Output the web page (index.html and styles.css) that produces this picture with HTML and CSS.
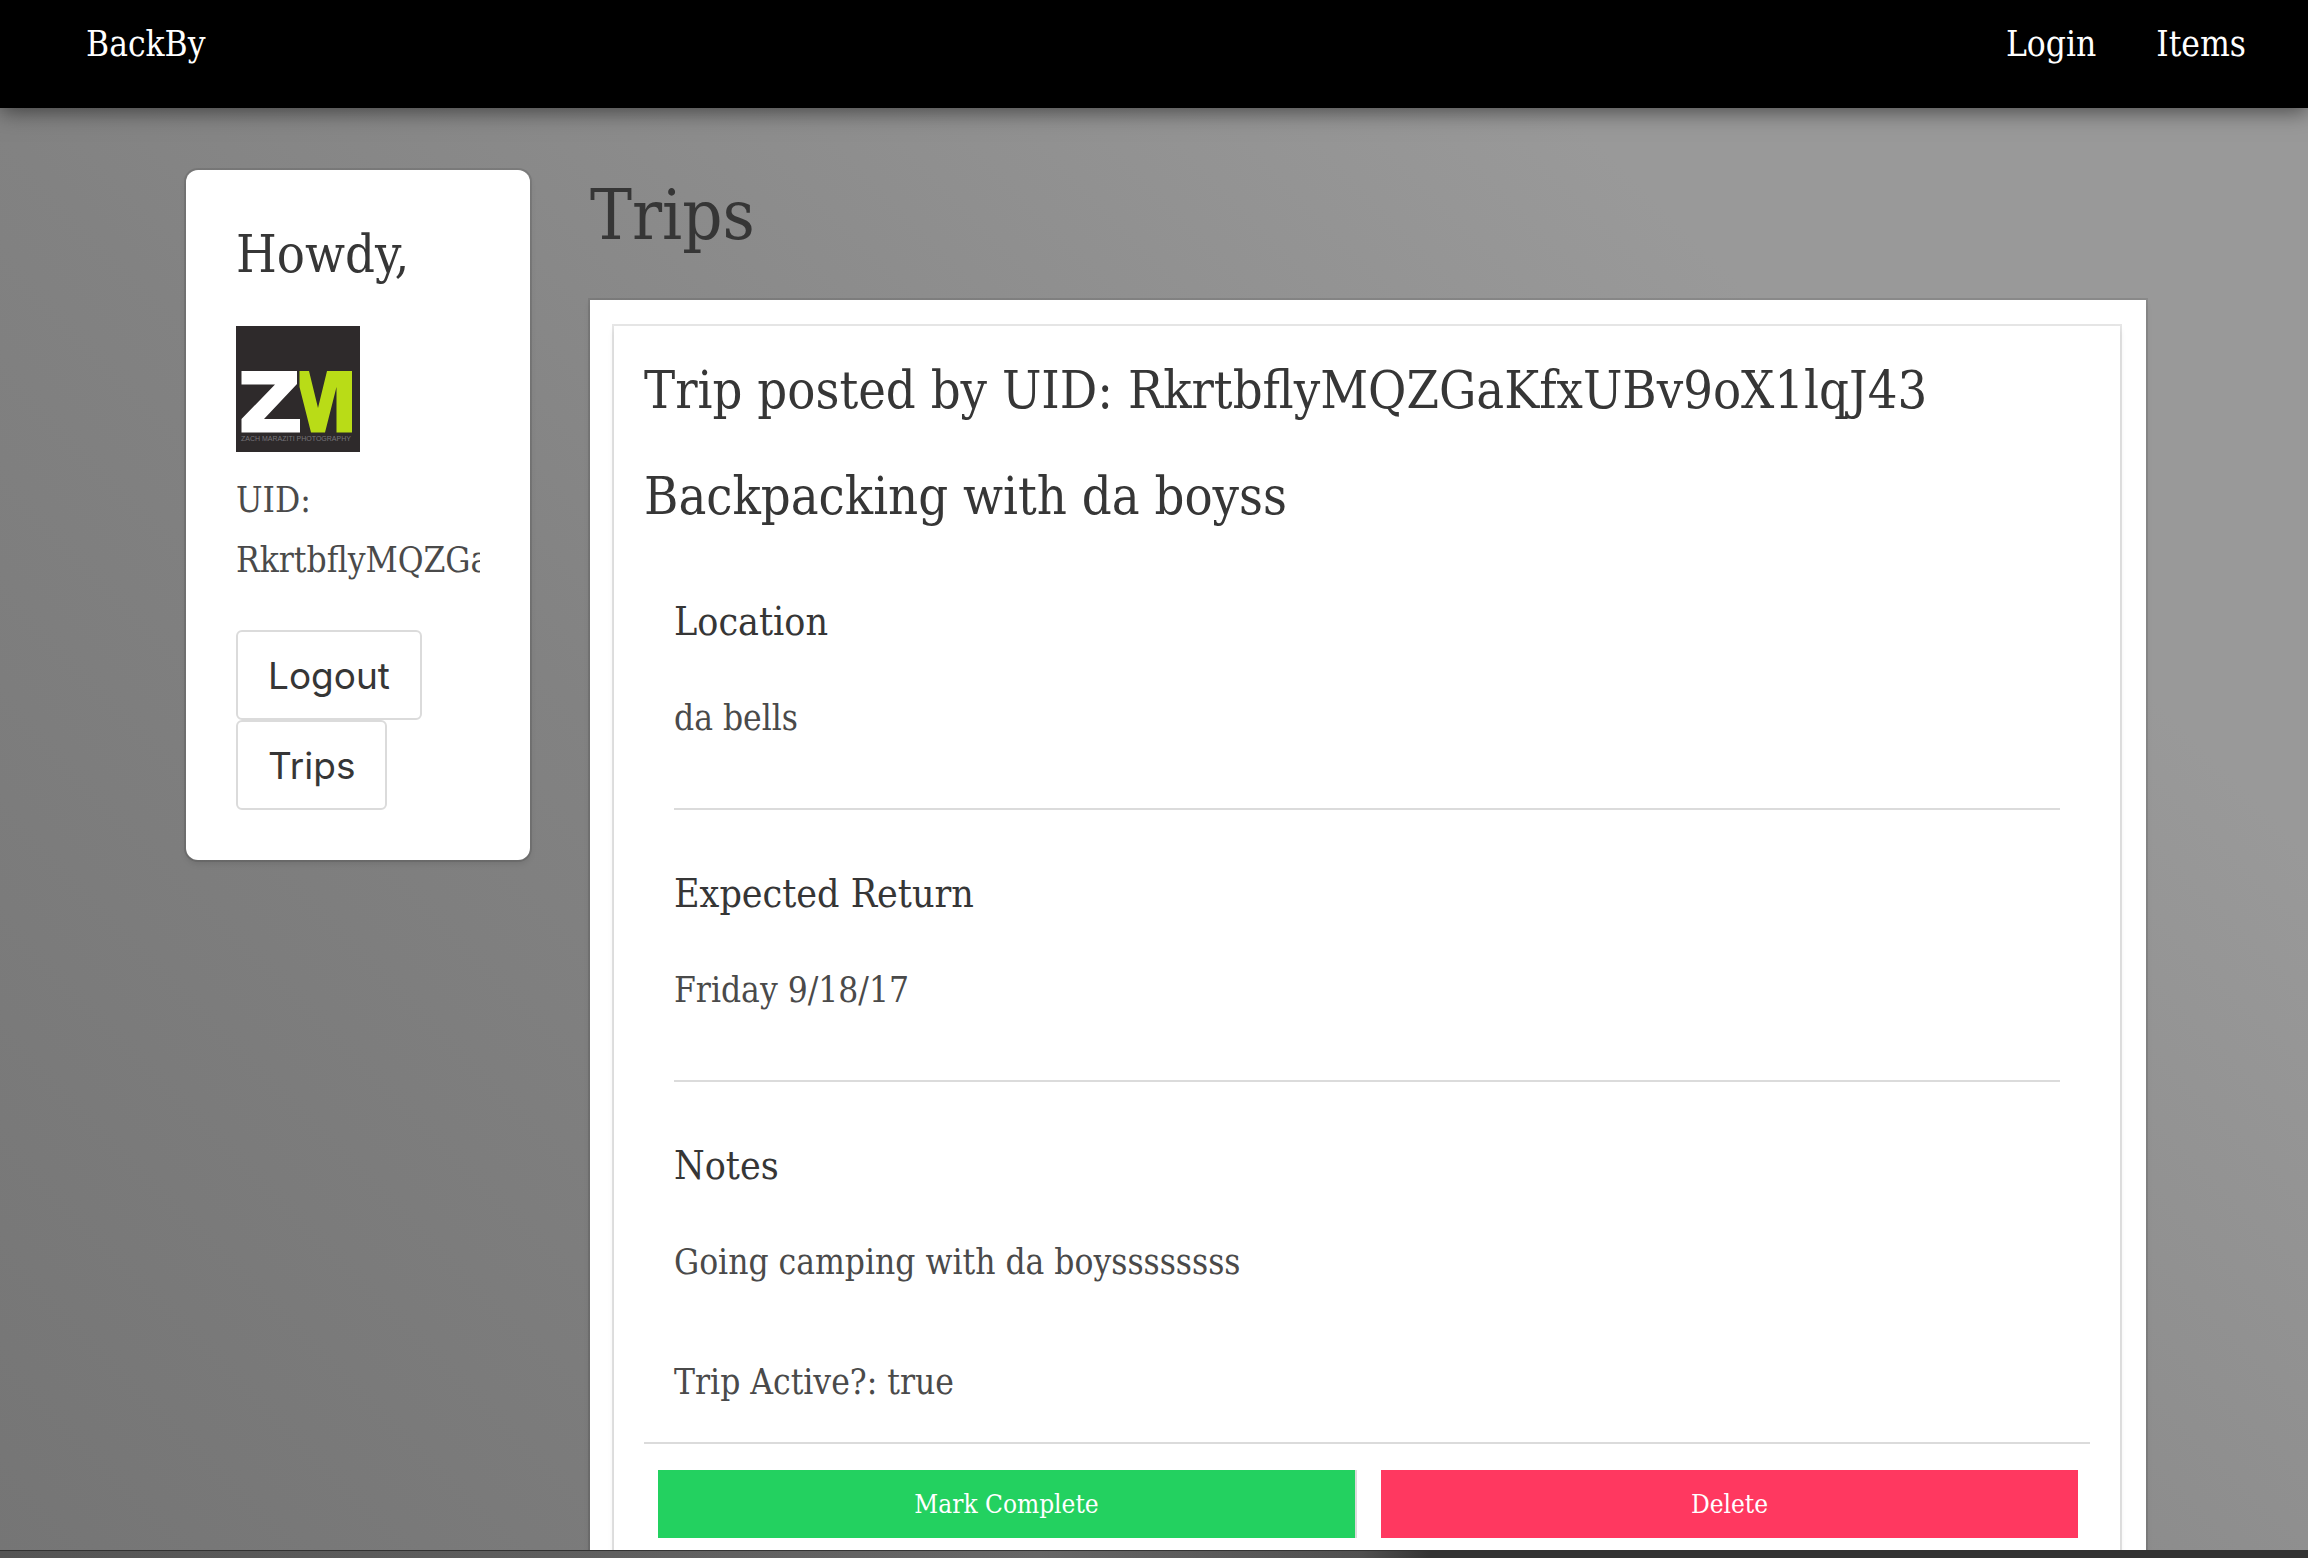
FILE: index.html
```html
<!DOCTYPE html>
<html lang="en">
<head>
<meta charset="utf-8">
<title>BackBy</title>
<link rel="stylesheet" href="styles.css">
</head>
<body>
<nav class="navbar">
  <a class="nav-link" href="#">BackBy</a>
  <div class="nav-menu">
    <a class="nav-link" href="#">Login</a>
    <a class="nav-link" href="#">Items</a>
  </div>
</nav>
<div class="page">
  <aside class="box profile">
    <h2 class="title">Howdy,</h2>
    <svg class="avatar" viewBox="0 0 124 126" role="img" aria-label="Profile picture">
      <rect width="124" height="126" fill="#2e2a2b"/>
      <path fill="#fff" d="M5.500 45H61V58L28 93H64V106.500H5.500V93L39 58.500H5.500Z"/>
      <path fill="#b9dc17" d="M63.500 45H73L82 82L91 45H116V106.500H100.500V61L89 106.500H75L63.500 61Z"/>
      <text x="5" y="115" font-size="7" fill="#77757a" class="avatar-caption">ZACH MARAZITI PHOTOGRAPHY</text>
    </svg>
    <p class="uid">UID: RkrtbflyMQZGaKfxUBv9oX1lqJ43</p>
    <div class="actions">
      <button class="button" type="button">Logout</button>
      <button class="button" type="button">Trips</button>
    </div>
  </aside>
  <main class="trips">
    <h1 class="heading">Trips</h1>
    <div class="panel">
      <article class="card">
        <h2 class="title">Trip posted by UID: RkrtbflyMQZGaKfxUBv9oX1lqJ43</h2>
        <h2 class="title">Backpacking with da boyss</h2>
        <div class="details">
          <section class="detail">
            <h3 class="subtitle">Location</h3>
            <p>da bells</p>
          </section>
          <section class="detail">
            <h3 class="subtitle">Expected Return</h3>
            <p>Friday 9/18/17</p>
          </section>
          <section class="detail">
            <h3 class="subtitle">Notes</h3>
            <p>Going camping with da boyssssssss</p>
          </section>
          <p>Trip Active?: true</p>
        </div>
        <footer class="card-footer">
          <button class="footer-button complete" type="button">Mark Complete</button>
          <button class="footer-button delete" type="button">Delete</button>
        </footer>
      </article>
    </div>
  </main>
</div>
<div class="dock-edge"></div>
</body>
</html>
```
FILE: styles.css
```css
* {
  box-sizing: border-box;
}

body {
  --serif: "DejaVu Serif Condensed", "Liberation Serif", serif;
  --line: #dbdbdb;
  --edge: 0 4px 6px rgba(10, 10, 10, 0.1), 0 0 0 2px rgba(10, 10, 10, 0.1);
  display: flex;
  flex-direction: column;
  height: 100vh;
  margin: 0;
  overflow: hidden;
  font-family: var(--serif);
  font-size: 35px;
  line-height: 60px;
  color: #4a4a4a;
  background: linear-gradient(45deg, #757575, #828282 37%, #999 78%);
}

h1, h2, h3, p {
  margin: 0;
  font-weight: 400;
}

.navbar {
  display: flex;
  flex: none;
  justify-content: space-between;
  height: 108px;
  padding: 14px 62px 0 86px;
  background: #000;
  box-shadow: 0 4px 20px rgba(0, 0, 0, 0.5);
}

.nav-menu {
  display: flex;
  gap: 60px;
}

.nav-link {
  color: #fff;
  text-decoration: none;
}

.page {
  display: flex;
  flex: 1;
  gap: 60px;
  align-items: flex-start;
  min-height: 0;
  padding: 62px 162px 0 186px;
  overflow: hidden;
}

.box {
  flex: none;
  width: 344px;
  padding: 50px;
  background: #fff;
  border-radius: 12px;
  box-shadow: var(--edge);
}

.title {
  margin-bottom: 38px;
  font-size: 52px;
  line-height: 68px;
  color: #363636;
}

.avatar {
  display: block;
  width: 124px;
  height: 126px;
  margin-bottom: 18px;
}

.avatar-caption {
  font-family: "Liberation Sans", sans-serif;
}

.uid {
  margin-bottom: 40px;
  overflow: hidden;
}

.actions {
  display: flex;
  flex-direction: column;
  align-items: flex-start;
}

.button {
  height: 90px;
  padding: 0 30px;
  font-family: Inter, sans-serif;
  font-size: 37px;
  color: #363636;
  background: #fff;
  border: 2px solid var(--line);
  border-radius: 6px;
}

.trips {
  flex: 1;
  min-width: 0;
}

.heading {
  margin-bottom: 40px;
  font-size: 70px;
  line-height: 90px;
  color: #363636;
}

.panel {
  padding: 26px 26px 26px 24px;
  background: #fff;
  box-shadow: var(--edge);
}

.card {
  padding: 30px;
  box-shadow: var(--edge);
}

.details {
  padding: 24px 30px 30px;
}

.detail {
  padding-bottom: 60px;
}

.detail + .detail {
  padding-top: 54px;
  border-top: 2px solid var(--line);
}

.subtitle {
  margin-bottom: 36px;
  font-size: 39px;
  color: #363636;
}

.card-footer {
  display: flex;
  gap: 24px;
  padding: 26px 12px 12px 14px;
  border-top: 2px solid var(--line);
}

.footer-button {
  flex: 1;
  height: 68px;
  padding: 0;
  font-family: var(--serif);
  font-size: 26px;
  color: #fff;
  border: 0;
}

.complete {
  background: #23d160;
  border-right: 2px solid var(--line);
}

.delete {
  background: #ff3860;
}

.dock-edge {
  flex: none;
  height: 8px;
  background: linear-gradient(90deg, #555, #666 45%, #505050 59%, #333 62%, #333);
  border-top: 1px solid #333;
}
```
